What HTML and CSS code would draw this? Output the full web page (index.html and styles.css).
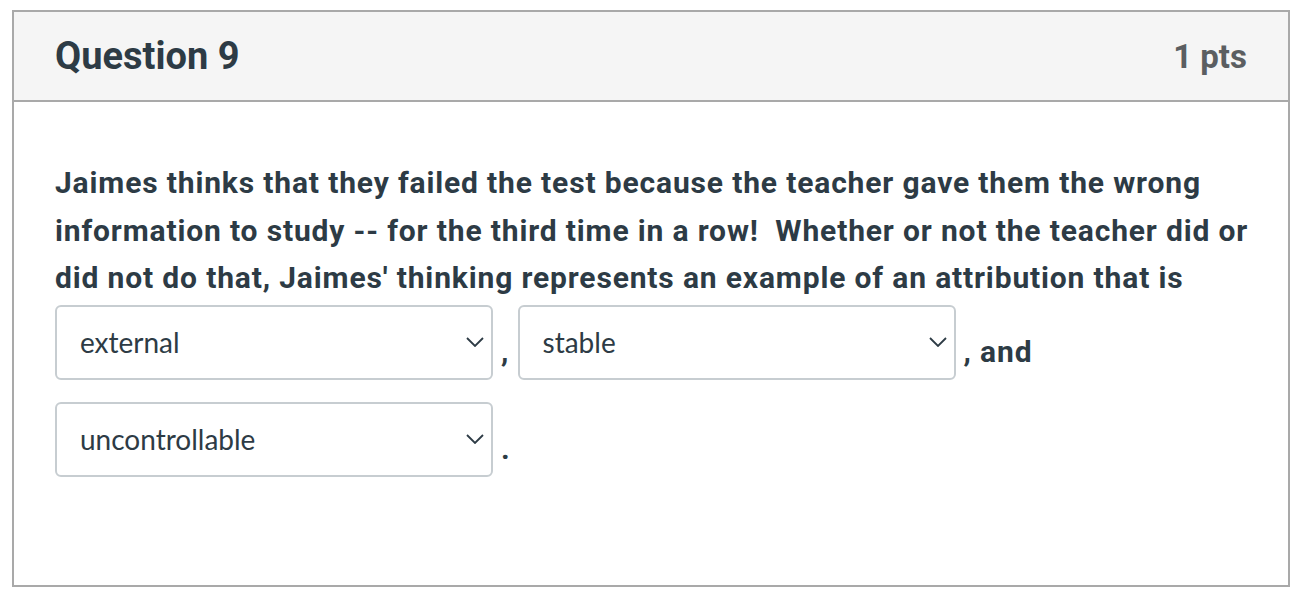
FILE: index.html
```html
<!DOCTYPE html>
<html lang="en">
<head>
  <meta charset="UTF-8" />
  <title>Question 9</title>
  <link rel="stylesheet" href="styles.css">
</head>
<body>
  <div class="question">
    <div class="header">
      <span class="title">Question 9</span>
      <span class="points">1 pts</span>
    </div>
    <div class="content">
      <p class="question-text">Jaimes thinks that they failed the test because the teacher gave them the wrong information to study -- for the third time in a row!&nbsp; Whether or not the teacher did or did not do that, Jaimes' thinking represents an example of an attribution that is
        <span class="dropdown"><span class="value">external</span><svg class="chevron" width="18" height="10" viewBox="0 0 18 10"><path d="M1 1 L9 9 L17 1" fill="none" stroke="#2d3b45" stroke-width="1.8"/></svg></span>, <span class="dropdown"><span class="value">stable</span><svg class="chevron" width="18" height="10" viewBox="0 0 18 10"><path d="M1 1 L9 9 L17 1" fill="none" stroke="#2d3b45" stroke-width="1.8"/></svg></span>, and
        <span class="dropdown"><span class="value">uncontrollable</span><svg class="chevron" width="18" height="10" viewBox="0 0 18 10"><path d="M1 1 L9 9 L17 1" fill="none" stroke="#2d3b45" stroke-width="1.8"/></svg></span>.
      </p>
    </div>
  </div>
</body>
</html>
```

FILE: styles.css
```css
body {
  margin: 10px 10px 0 12px;
  background: #fff;
  color: #2d3b45;
  font-family: Roboto, "Liberation Sans", sans-serif;
}
.question {
  border: 2px solid #a9a9a9;
  height: 577px;
  box-sizing: border-box;
}
.header {
  display: flex;
  justify-content: space-between;
  align-items: center;
  height: 88px;
  padding: 0 41px;
  background: #f5f5f5;
  border-bottom: 2px solid #a9a9a9;
  font-weight: bold;
}
.title {
  font-size: 38px;
}
.points {
  font-size: 33px;
  color: #5b5e61;
}
.content {
  padding: 57px 36px 0 41px;
}
.question-text {
  margin: 0;
  font-size: 30px;
  font-weight: bold;
  line-height: 47.5px;
  letter-spacing: 0.85px;
}
.dropdown {
  display: inline-flex;
  align-items: center;
  justify-content: space-between;
  box-sizing: border-box;
  width: 438px;
  height: 75px;
  margin: 3px 8px 19px 0;
  padding: 0 7px 0 23px;
  border: 2px solid #c7cdd1;
  border-radius: 6px;
  background: #fff;
  vertical-align: 8px;
  font-family: Lato, "Open Sans", sans-serif;
  font-size: 28px;
  font-weight: normal;
  letter-spacing: 0;
  line-height: 1;
}
.chevron {
  flex: none;
}
```
